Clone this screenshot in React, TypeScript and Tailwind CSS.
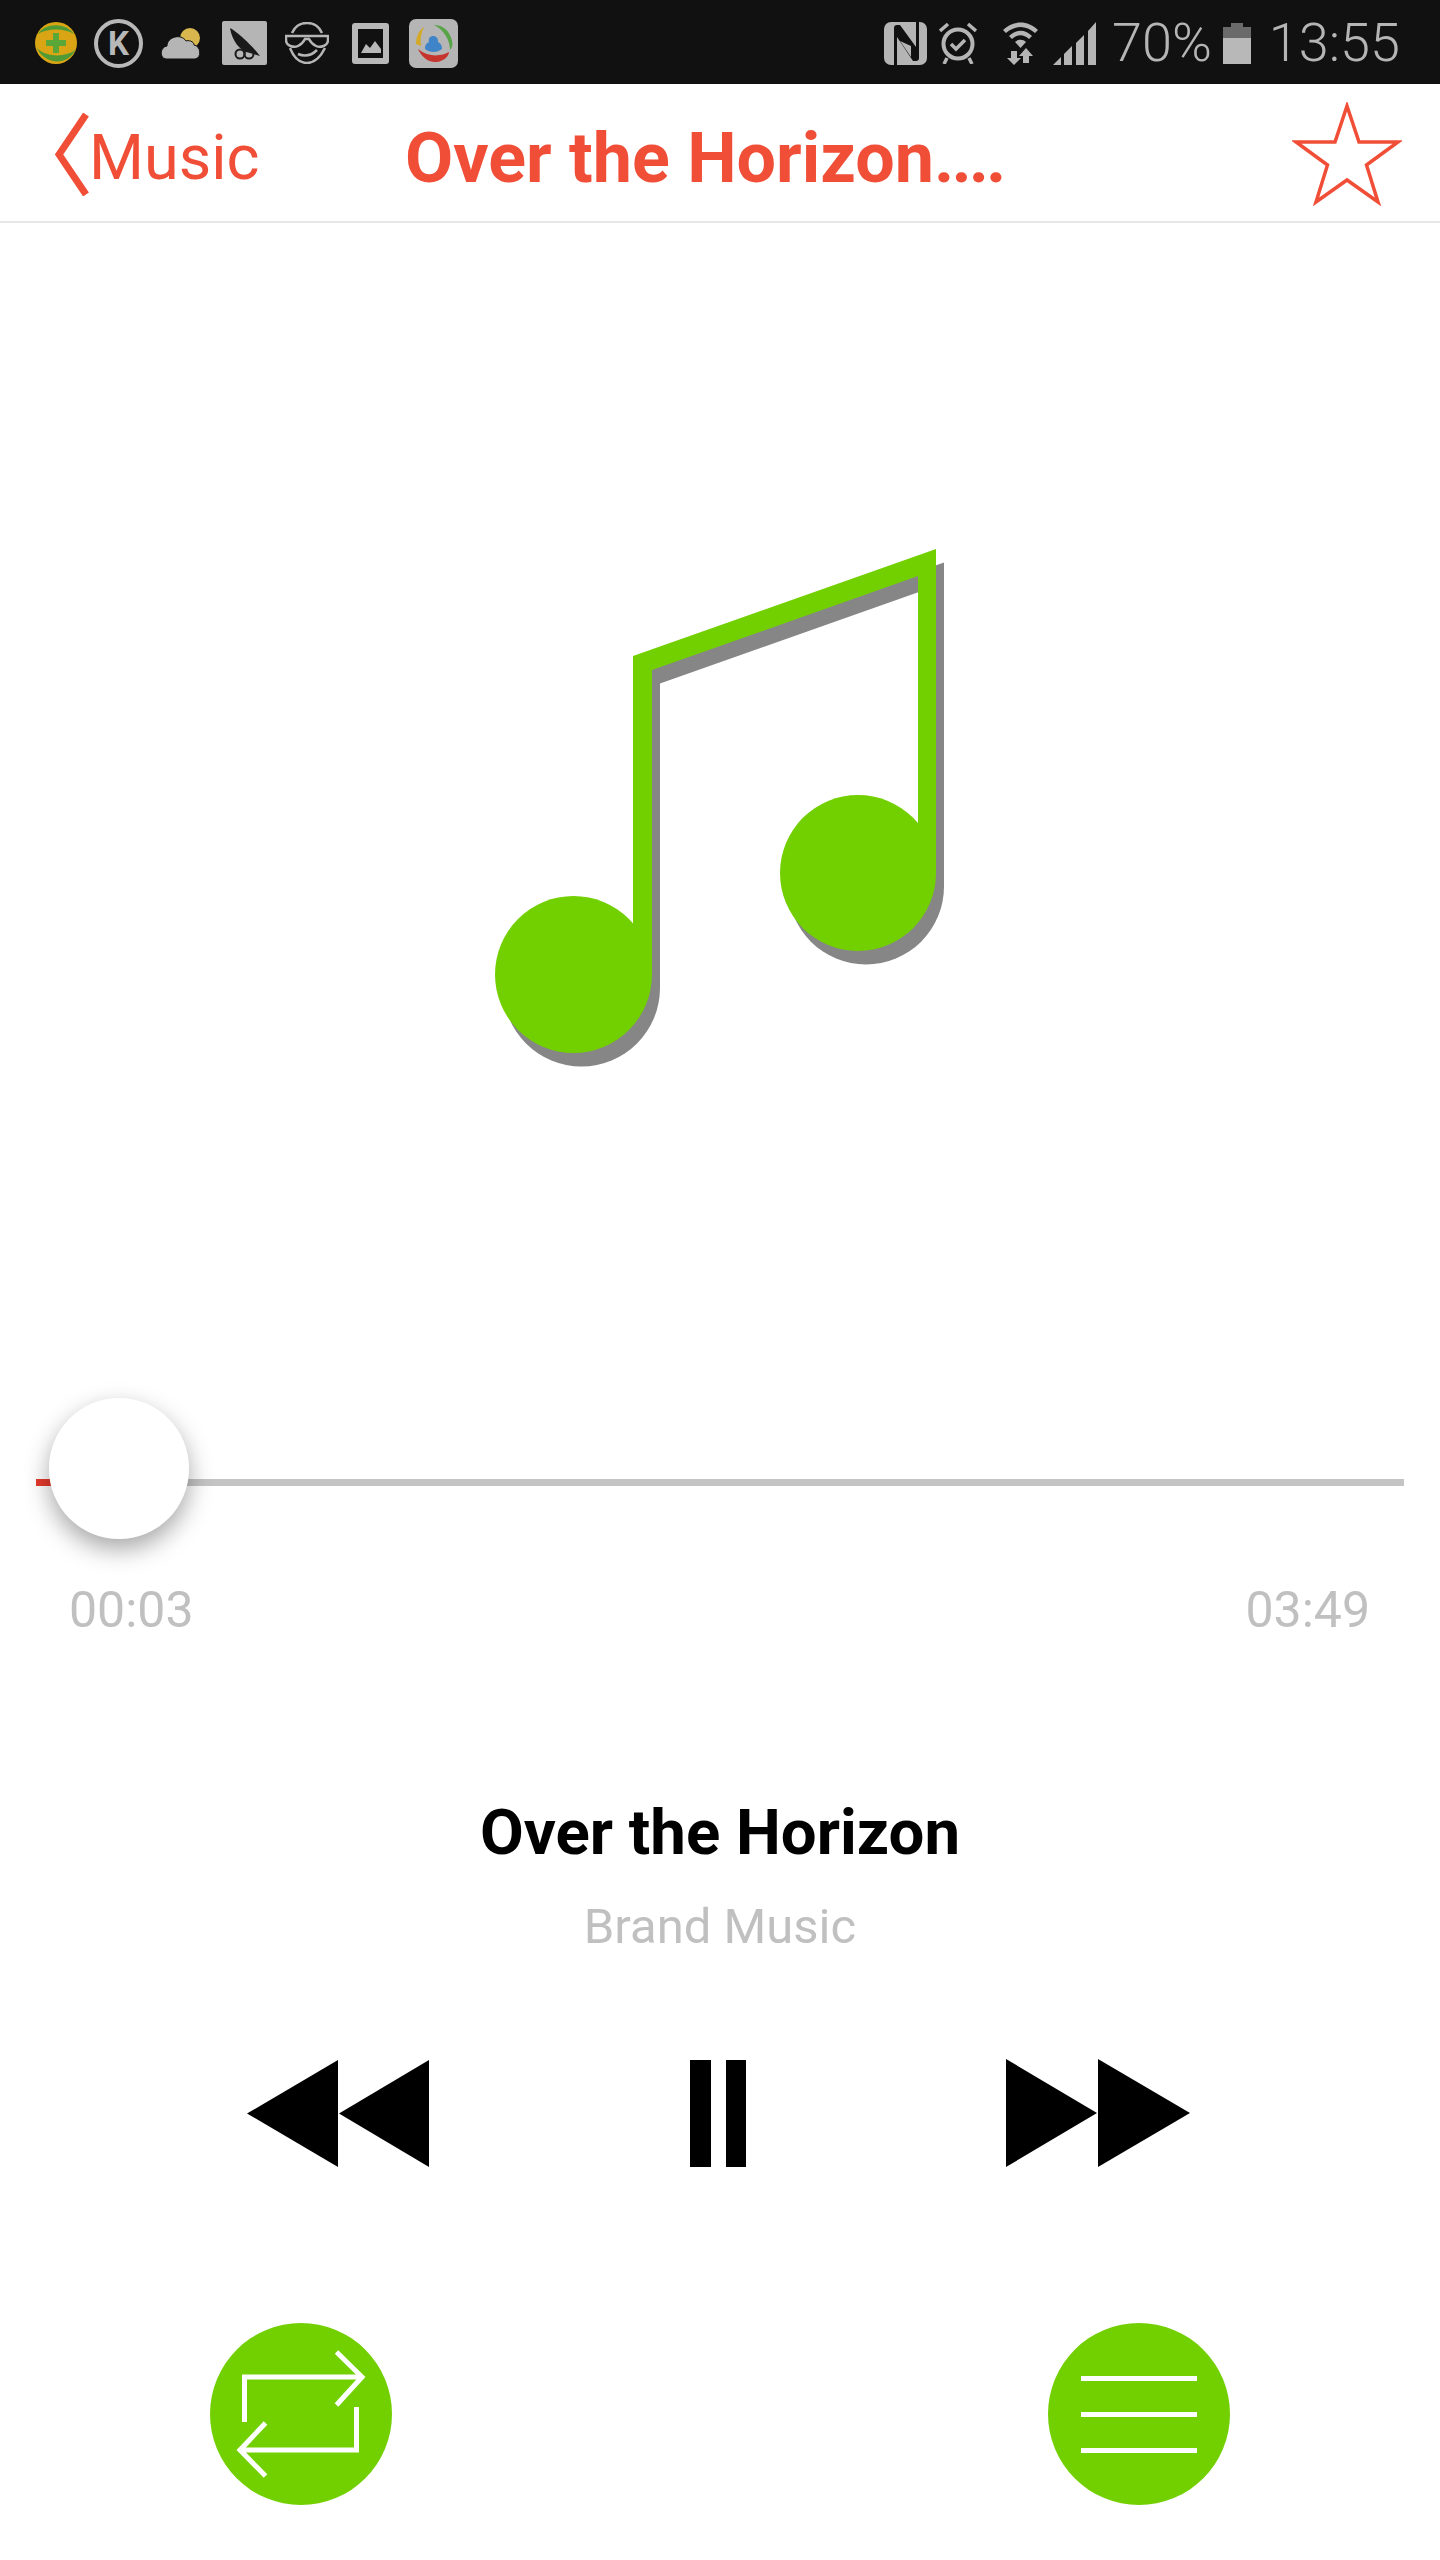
import { ReactNode } from 'react'

const roboto = "font-['Roboto',sans-serif]"

function StatusIcons() {
  return (
    <div className="flex items-center pl-[35px]">
      <svg width="42" height="42" viewBox="0 0 42 42">
        <circle cx="21" cy="21" r="21" fill="#d9a514" />
        <path d="M3 12C10 1 30 0 39 12C30 6 12 6 3 12Z" fill="#4f9a34" />
        <path d="M2 26C10 35 30 36 40 28C34 43 10 44 2 26Z" fill="#4f9a34" />
        <path d="M18 11h6v7h7v6h-7v7h-6v-7h-7v-6h7Z" fill="#5aa636" />
      </svg>
      <div className={`ml-[17px] flex h-[49px] w-[49px] items-center justify-center rounded-full border-[4px] border-[#b8b8b8] text-[33px] leading-none font-bold text-[#b8b8b8] ${roboto}`}>
        K
      </div>
      <svg className="ml-[18px]" width="40" height="31" viewBox="0 0 40 31">
        <circle cx="29" cy="10" r="10" fill="#d8b84e" />
        <path d="M5 31C-2 30-1 19 6 18C6 9 20 5 25 13C27 12 33 13 33 17C40 18 41 30 34 31Z" fill="#b5b5b5" stroke="#111" strokeWidth="1" />
      </svg>
      <svg className="ml-[21px]" width="45" height="44" viewBox="0 0 45 44">
        <rect width="45" height="44" rx="2" fill="#b5b5b5" />
        <path d="M8 7C13 9 32 26 38 35L28 32C18 30 10 20 8 7Z" fill="#1a1a1a" />
        <circle cx="18" cy="33" r="4.5" fill="none" stroke="#1a1a1a" strokeWidth="2" />
        <circle cx="27" cy="33" r="4.5" fill="none" stroke="#1a1a1a" strokeWidth="2" />
      </svg>
      <svg className="ml-[18px]" width="44" height="42" viewBox="0 0 44 42" fill="none" stroke="#b5b5b5" strokeWidth="2.5">
        <path d="M7 11C10 4 15 1 22 1C29 1 34 4 37 11" />
        <path d="M5 26C9 36 15 41 22 41C29 41 35 36 40 26" />
        <path d="M1 14H43V18C43 24 35 26 31 24C27 22 25 19 24 17H20C19 19 17 22 13 24C9 26 1 24 1 18Z" />
        <path d="M13 32C20 35 26 34 32 28" />
      </svg>
      <svg className="ml-[23px]" width="37" height="41" viewBox="0 0 37 41">
        <rect width="37" height="41" rx="3" fill="#b8b8b8" />
        <rect x="6" y="6" width="25" height="29" fill="#111" />
        <path d="M9 30L14 21L18 25L23 18L29 26V30Z" fill="#b8b8b8" />
      </svg>
      <svg className="ml-[20px]" width="49" height="49" viewBox="0 0 49 49">
        <rect width="49" height="49" rx="7" fill="#b5b5b5" />
        <path d="M7 25C7 18 10 11 15 8C12 14 11 20 12 27Z" fill="#d3a928" />
        <path d="M25 6C34 6 41 12 43 22C44 26 43 29 41 31C41 21 35 11 25 6Z" fill="#57a447" />
        <path d="M9 30C12 37 19 44 28 43C35 42 40 37 40 33C33 37 20 39 9 30Z" fill="#c6352d" />
        <path d="M16 30C16 24 19 24 20 23C18 15 30 15 29 23C30 24 33 24 33 30C28 34 21 34 16 30Z" fill="#3f84c8" />
      </svg>
    </div>
  )
}

function SystemIcons() {
  return (
    <div className="flex items-center pr-[40px]">
      <svg width="43" height="43" viewBox="0 0 43 43">
        <rect width="43" height="43" rx="7" fill="#b5b5b5" />
        <path d="M10 43V6C10 4 11 3 13 3H16L32 25V0H35V36C35 38 34 39 32 39H29L13 15V43Z" fill="#111" />
        <path d="M16 19L27 35V24Z" fill="#b5b5b5" />
      </svg>
      <svg className="ml-[12px]" width="38" height="42" viewBox="0 0 38 42" fill="none" stroke="#b5b5b5">
        <circle cx="19" cy="22" r="14.5" strokeWidth="4" />
        <path d="M12 22L17 27L26 18" strokeWidth="3.5" />
        <path d="M1 9L9 2M37 9L29 2M8 36L5 42M30 36L33 42" strokeWidth="3.5" />
      </svg>
      <svg className="ml-[25px]" width="37" height="43" viewBox="0 0 37 43" fill="#b5b5b5">
        <path d="M1 8C11 -2 26 -2 36 8L33 11C24 3 13 3 4 11Z" />
        <path d="M7 14C14 7 23 7 30 14L27 17C21 12 16 12 10 17Z" />
        <path d="M13 20C16 17 21 17 24 20L18.500 26Z" />
        <path d="M9 29H15V36H19L12 43L5 36H9Z" />
        <path d="M21 41V34H17L24 26L31 34H27V41Z" />
      </svg>
      <svg className="ml-[14px]" width="43" height="43" viewBox="0 0 43 43" fill="#b5b5b5">
        <path d="M0 43L8 35V43Z" />
        <path d="M11 32L19 24V43H11Z" />
        <path d="M23 21L31 13V43H23Z" />
        <path d="M35 9L43 0V43H35Z" />
      </svg>
      <span className={`ml-[16px] text-[54px] leading-none font-light text-[#b5b5b5] ${roboto}`}>70%</span>
      <div className="ml-[11px] flex h-[41px] w-[28px] flex-col items-center">
        <div className="h-[4px] w-[12px] bg-[#6a6a6a]" />
        <div className="h-[11px] w-full bg-[#6a6a6a]" />
        <div className="h-[26px] w-full bg-[#b8b8b8]" />
      </div>
      <span className={`ml-[18px] text-[54px] leading-none font-light text-[#b5b5b5] ${roboto}`}>13:55</span>
    </div>
  )
}

function NavBar() {
  return (
    <div className="flex h-[139px] items-center border-b-2 border-[#e6e6e6] pt-[10px] text-[#f04e37]">
      <svg className="ml-[55px] mt-[-6px]" width="34" height="83" viewBox="0 0 34 83" fill="none" stroke="#f04e37" strokeWidth="7">
        <path d="M31 1.500L4 41.500L31 81.500" />
      </svg>
      <span className={`w-[316px] text-[63px] leading-none ${roboto}`}>Music</span>
      <span className={`w-[887px] text-[70px] leading-none font-bold ${roboto}`}>
        Over the Horizon<span className="tracking-[-3px]">....</span>
      </span>
      <svg className="mt-[-8px]" width="110" height="104" viewBox="0 0 110 104" fill="none" stroke="#f04e37" strokeWidth="3.500">
        <path d="M55 4L67 40H106L74.500 63L86 100L55 78L24 100L35.500 63L4 40H43Z" />
      </svg>
    </div>
  )
}

function MusicNote() {
  const shape: ReactNode = (
    <>
      <path d="M138 107L441 0V324H423V27L157 121V425H138Z" />
      <circle cx="78.500" cy="425.500" r="78.500" />
      <circle cx="363" cy="324" r="78" />
    </>
  )
  return (
    <svg width="450" height="518" viewBox="0 0 450 518">
      <g fill="#868686" transform="translate(8 13.500)">{shape}</g>
      <g fill="#72d000">{shape}</g>
    </svg>
  )
}

function Slider() {
  return (
    <div className="mx-[36px] mt-[412px]">
      <div className="relative h-[7px] bg-[#c4c4c4]">
        <div className="h-full w-[20px] bg-[#e53a2c]" />
        <div className="absolute top-[-81px] left-[13px] h-[141px] w-[140px] rounded-full bg-white shadow-[0_10px_24px_rgba(0,0,0,0.35)]" />
      </div>
      <div className={`mt-[99px] flex justify-between pr-[34px] pl-[33px] text-[50px] leading-none text-[#c0c0c0] ${roboto}`}>
        <span>00:03</span>
        <span>03:49</span>
      </div>
    </div>
  )
}

function Controls() {
  return (
    <div className="mt-[108px] flex items-center pl-[247px]">
      <svg width="182" height="107" viewBox="0 0 182 107" fill="#000">
        <path d="M91 0V107L0 53.500Z" />
        <path d="M182 0V107L92 53.500Z" />
      </svg>
      <div className="ml-[261px] flex gap-[15px]">
        <div className="h-[107px] w-[21px] bg-black" />
        <div className="h-[107px] w-[20px] bg-black" />
      </div>
      <svg className="ml-[260px]" width="184" height="108" viewBox="0 0 184 108" fill="#000">
        <path d="M0 0V108L91 54Z" />
        <path d="M92 0V108L184 54Z" />
      </svg>
    </div>
  )
}

function RoundButton({ className = '', children }: { className?: string; children: ReactNode }) {
  return (
    <div className={`flex h-[182px] w-[182px] items-center justify-center rounded-full bg-[#72d000] ${className}`}>
      {children}
    </div>
  )
}

export default function App() {
  return (
    <div className="h-[2560px] w-[1440px] overflow-hidden bg-white">
      <div className="flex h-[84px] items-center justify-between bg-[#111111] pt-[2px]">
        <StatusIcons />
        <SystemIcons />
      </div>
      <NavBar />
      <div className="flex justify-center pt-[326px]">
        <MusicNote />
      </div>
      <Slider />
      <div className={`mt-[166px] text-center ${roboto}`}>
        <div className="text-[63.500px] leading-[64px] font-bold text-black">Over the Horizon</div>
        <div className="mt-[37px] text-[49px] leading-none text-[#c0c0c0]">Brand Music</div>
      </div>
      <Controls />
      <div className="mt-[156px] flex pl-[210px]">
        <RoundButton>
          <svg width="130" height="130" viewBox="0 0 130 130" fill="none" stroke="#fff" strokeWidth="5">
            <path d="M8.500 73V28H126M100.500 3L126 28L100.500 56" />
            <path d="M120.500 58V101H4M29.500 74L4 101L29.500 127" />
          </svg>
        </RoundButton>
        <RoundButton className="ml-[656px]">
          <div className="flex w-[116px] flex-col gap-[31px]">
            <div className="h-[5px] bg-white" />
            <div className="h-[5px] bg-white" />
            <div className="h-[5px] bg-white" />
          </div>
        </RoundButton>
      </div>
    </div>
  )
}
